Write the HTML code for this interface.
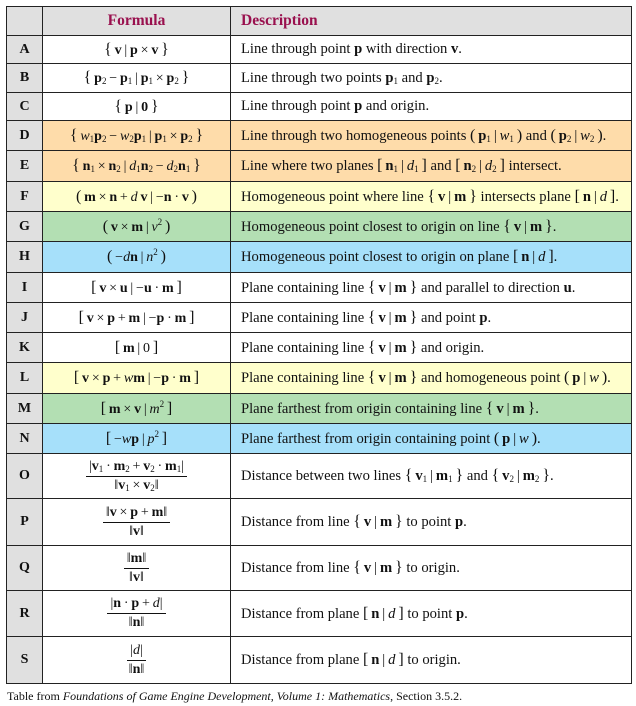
<!DOCTYPE html>
<html><head><meta charset="utf-8"><style>
body{margin:0;background:#fff;width:636px;height:706px;position:relative;font-family:"Liberation Serif",serif;color:#111;overflow:hidden}
.r{position:absolute;left:7px;width:624px;display:flex;border-top:1px solid #222;box-sizing:border-box}
.c1{width:36px;background:#e0e0e0;font-weight:bold;font-size:14px;display:flex;align-items:center;justify-content:center;border-right:1px solid #222;box-sizing:border-box}
.c2{width:188px;display:flex;align-items:center;justify-content:center;font-size:14px;border-right:1px solid #222;box-sizing:border-box;white-space:nowrap}
.c3{flex:1;display:flex;align-items:center;padding-left:10px;font-size:14.6px;white-space:nowrap}
b{font-weight:bold}
i{font-style:italic}
sub{font-size:9px;vertical-align:-2px;line-height:0}
sup{font-size:9px;vertical-align:6px;line-height:0}
.o{background:#fedcaa}.y{background:#ffffcc}.g{background:#b3dfb3}.bl{background:#a6e0fa}
.frac{display:inline-flex;flex-direction:column;align-items:center;line-height:18px}
.frac .n{border-bottom:1px solid #111;padding:0 3px}
.k{font-size:16px}
#box{position:absolute;left:6px;top:6px;width:626px;height:678px;border:1px solid #222;box-sizing:border-box;pointer-events:none;z-index:5}
.h .c2,.h .c3{color:#99104e;font-weight:bold;font-size:15.5px;background:#e0e0e0}
.cap{position:absolute;left:7px;top:689px;font-size:12px}
</style></head><body>
<div id="box"></div>
<div class="r h" style="top:7px;height:28px;border-top:none"><div class="c1"></div><div class="c2">Formula</div><div class="c3">Description</div></div>
<div class="r" style="top:35px;height:28px"><div class="c1">A</div><div class="c2"><span><span class="k">{</span>&thinsp;<b>v</b>&thinsp;|&thinsp;<b>p</b>&thinsp;×&thinsp;<b>v</b>&thinsp;<span class="k">}</span></span></div><div class="c3"><span>Line through point <b>p</b> with direction <b>v</b>.</span></div></div>
<div class="r" style="top:63px;height:29px"><div class="c1">B</div><div class="c2"><span><span class="k">{</span>&thinsp;<b>p</b><sub>2</sub>&thinsp;−&thinsp;<b>p</b><sub>1</sub>&thinsp;|&thinsp;<b>p</b><sub>1</sub>&thinsp;×&thinsp;<b>p</b><sub>2</sub>&thinsp;<span class="k">}</span></span></div><div class="c3"><span>Line through two points <b>p</b><sub>1</sub> and <b>p</b><sub>2</sub>.</span></div></div>
<div class="r" style="top:92px;height:28px"><div class="c1">C</div><div class="c2"><span><span class="k">{</span>&thinsp;<b>p</b>&thinsp;|&thinsp;<b>0</b>&thinsp;<span class="k">}</span></span></div><div class="c3"><span>Line through point <b>p</b> and origin.</span></div></div>
<div class="r" style="top:120px;height:30px"><div class="c1">D</div><div class="c2 o"><span><span class="k">{</span>&thinsp;<i>w</i><sub>1</sub><b>p</b><sub>2</sub>&thinsp;−&thinsp;<i>w</i><sub>2</sub><b>p</b><sub>1</sub>&thinsp;|&thinsp;<b>p</b><sub>1</sub>&thinsp;×&thinsp;<b>p</b><sub>2</sub>&thinsp;<span class="k">}</span></span></div><div class="c3 o"><span>Line through two homogeneous points <span class="k">(</span>&thinsp;<b>p</b><sub>1</sub>&thinsp;|&thinsp;<i>w</i><sub>1</sub>&thinsp;<span class="k">)</span> and <span class="k">(</span>&thinsp;<b>p</b><sub>2</sub>&thinsp;|&thinsp;<i>w</i><sub>2</sub>&thinsp;<span class="k">)</span>.</span></div></div>
<div class="r" style="top:150px;height:31px"><div class="c1">E</div><div class="c2 o"><span><span class="k">{</span>&thinsp;<b>n</b><sub>1</sub>&thinsp;×&thinsp;<b>n</b><sub>2</sub>&thinsp;|&thinsp;<i>d</i><sub>1</sub><b>n</b><sub>2</sub>&thinsp;−&thinsp;<i>d</i><sub>2</sub><b>n</b><sub>1</sub>&thinsp;<span class="k">}</span></span></div><div class="c3 o"><span>Line where two planes <span class="k">[</span>&thinsp;<b>n</b><sub>1</sub>&thinsp;|&thinsp;<i>d</i><sub>1</sub>&thinsp;<span class="k">]</span> and <span class="k">[</span>&thinsp;<b>n</b><sub>2</sub>&thinsp;|&thinsp;<i>d</i><sub>2</sub>&thinsp;<span class="k">]</span> intersect.</span></div></div>
<div class="r" style="top:181px;height:30px"><div class="c1">F</div><div class="c2 y"><span><span class="k">(</span>&thinsp;<b>m</b>&thinsp;×&thinsp;<b>n</b>&thinsp;+&thinsp;<i>d</i>&thinsp;<b>v</b>&thinsp;|&thinsp;−<b>n</b>&thinsp;·&thinsp;<b>v</b>&thinsp;<span class="k">)</span></span></div><div class="c3 y"><span>Homogeneous point where line <span class="k">{</span>&thinsp;<b>v</b>&thinsp;|&thinsp;<b>m</b>&thinsp;<span class="k">}</span> intersects plane <span class="k">[</span>&thinsp;<b>n</b>&thinsp;|&thinsp;<i>d</i>&thinsp;<span class="k">]</span>.</span></div></div>
<div class="r" style="top:211px;height:30px"><div class="c1">G</div><div class="c2 g"><span><span class="k">(</span>&thinsp;<b>v</b>&thinsp;×&thinsp;<b>m</b>&thinsp;|&thinsp;<i>v</i><sup>2</sup>&thinsp;<span class="k">)</span></span></div><div class="c3 g"><span>Homogeneous point closest to origin on line <span class="k">{</span>&thinsp;<b>v</b>&thinsp;|&thinsp;<b>m</b>&thinsp;<span class="k">}</span>.</span></div></div>
<div class="r" style="top:241px;height:31px"><div class="c1">H</div><div class="c2 bl"><span><span class="k">(</span>&thinsp;−<i>d</i><b>n</b>&thinsp;|&thinsp;<i>n</i><sup>2</sup>&thinsp;<span class="k">)</span></span></div><div class="c3 bl"><span>Homogeneous point closest to origin on plane <span class="k">[</span>&thinsp;<b>n</b>&thinsp;|&thinsp;<i>d</i>&thinsp;<span class="k">]</span>.</span></div></div>
<div class="r" style="top:272px;height:30px"><div class="c1">I</div><div class="c2"><span><span class="k">[</span>&thinsp;<b>v</b>&thinsp;×&thinsp;<b>u</b>&thinsp;|&thinsp;−<b>u</b>&thinsp;·&thinsp;<b>m</b>&thinsp;<span class="k">]</span></span></div><div class="c3"><span>Plane containing line <span class="k">{</span>&thinsp;<b>v</b>&thinsp;|&thinsp;<b>m</b>&thinsp;<span class="k">}</span> and parallel to direction <b>u</b>.</span></div></div>
<div class="r" style="top:302px;height:30px"><div class="c1">J</div><div class="c2"><span><span class="k">[</span>&thinsp;<b>v</b>&thinsp;×&thinsp;<b>p</b>&thinsp;+&thinsp;<b>m</b>&thinsp;|&thinsp;−<b>p</b>&thinsp;·&thinsp;<b>m</b>&thinsp;<span class="k">]</span></span></div><div class="c3"><span>Plane containing line <span class="k">{</span>&thinsp;<b>v</b>&thinsp;|&thinsp;<b>m</b>&thinsp;<span class="k">}</span> and point <b>p</b>.</span></div></div>
<div class="r" style="top:332px;height:30px"><div class="c1">K</div><div class="c2"><span><span class="k">[</span>&thinsp;<b>m</b>&thinsp;|&thinsp;0&thinsp;<span class="k">]</span></span></div><div class="c3"><span>Plane containing line <span class="k">{</span>&thinsp;<b>v</b>&thinsp;|&thinsp;<b>m</b>&thinsp;<span class="k">}</span> and origin.</span></div></div>
<div class="r" style="top:362px;height:31px"><div class="c1">L</div><div class="c2 y"><span><span class="k">[</span>&thinsp;<b>v</b>&thinsp;×&thinsp;<b>p</b>&thinsp;+&thinsp;<i>w</i><b>m</b>&thinsp;|&thinsp;−<b>p</b>&thinsp;·&thinsp;<b>m</b>&thinsp;<span class="k">]</span></span></div><div class="c3 y"><span>Plane containing line <span class="k">{</span>&thinsp;<b>v</b>&thinsp;|&thinsp;<b>m</b>&thinsp;<span class="k">}</span> and homogeneous point <span class="k">(</span>&thinsp;<b>p</b>&thinsp;|&thinsp;<i>w</i>&thinsp;<span class="k">)</span>.</span></div></div>
<div class="r" style="top:393px;height:30px"><div class="c1">M</div><div class="c2 g"><span><span class="k">[</span>&thinsp;<b>m</b>&thinsp;×&thinsp;<b>v</b>&thinsp;|&thinsp;<i>m</i><sup>2</sup>&thinsp;<span class="k">]</span></span></div><div class="c3 g"><span>Plane farthest from origin containing line <span class="k">{</span>&thinsp;<b>v</b>&thinsp;|&thinsp;<b>m</b>&thinsp;<span class="k">}</span>.</span></div></div>
<div class="r" style="top:423px;height:30px"><div class="c1">N</div><div class="c2 bl"><span><span class="k">[</span>&thinsp;−<i>w</i><b>p</b>&thinsp;|&thinsp;<i>p</i><sup>2</sup>&thinsp;<span class="k">]</span></span></div><div class="c3 bl"><span>Plane farthest from origin containing point <span class="k">(</span>&thinsp;<b>p</b>&thinsp;|&thinsp;<i>w</i>&thinsp;<span class="k">)</span>.</span></div></div>
<div class="r" style="top:453px;height:45px"><div class="c1">O</div><div class="c2"><span class="frac"><span class="n">|<b>v</b><sub>1</sub>&thinsp;·&thinsp;<b>m</b><sub>2</sub>&thinsp;+&thinsp;<b>v</b><sub>2</sub>&thinsp;·&thinsp;<b>m</b><sub>1</sub>|</span><span>‖<b>v</b><sub>1</sub>&thinsp;×&thinsp;<b>v</b><sub>2</sub>‖</span></span></div><div class="c3"><span>Distance between two lines <span class="k">{</span>&thinsp;<b>v</b><sub>1</sub>&thinsp;|&thinsp;<b>m</b><sub>1</sub>&thinsp;<span class="k">}</span> and <span class="k">{</span>&thinsp;<b>v</b><sub>2</sub>&thinsp;|&thinsp;<b>m</b><sub>2</sub>&thinsp;<span class="k">}</span>.</span></div></div>
<div class="r" style="top:498px;height:47px"><div class="c1">P</div><div class="c2"><span class="frac"><span class="n">‖<b>v</b>&thinsp;×&thinsp;<b>p</b>&thinsp;+&thinsp;<b>m</b>‖</span><span>‖<b>v</b>‖</span></span></div><div class="c3"><span>Distance from line <span class="k">{</span>&thinsp;<b>v</b>&thinsp;|&thinsp;<b>m</b>&thinsp;<span class="k">}</span> to point <b>p</b>.</span></div></div>
<div class="r" style="top:545px;height:45px"><div class="c1">Q</div><div class="c2"><span class="frac"><span class="n">‖<b>m</b>‖</span><span>‖<b>v</b>‖</span></span></div><div class="c3"><span>Distance from line <span class="k">{</span>&thinsp;<b>v</b>&thinsp;|&thinsp;<b>m</b>&thinsp;<span class="k">}</span> to origin.</span></div></div>
<div class="r" style="top:590px;height:46px"><div class="c1">R</div><div class="c2"><span class="frac"><span class="n">|<b>n</b>&thinsp;·&thinsp;<b>p</b>&thinsp;+&thinsp;<i>d</i>|</span><span>‖<b>n</b>‖</span></span></div><div class="c3"><span>Distance from plane <span class="k">[</span>&thinsp;<b>n</b>&thinsp;|&thinsp;<i>d</i>&thinsp;<span class="k">]</span> to point <b>p</b>.</span></div></div>
<div class="r" style="top:636px;height:47px"><div class="c1">S</div><div class="c2"><span class="frac"><span class="n">|<i>d</i>|</span><span>‖<b>n</b>‖</span></span></div><div class="c3"><span>Distance from plane <span class="k">[</span>&thinsp;<b>n</b>&thinsp;|&thinsp;<i>d</i>&thinsp;<span class="k">]</span> to origin.</span></div></div>
<div class="cap">Table from <i>Foundations of Game Engine Development, Volume 1: Mathematics</i>, Section 3.5.2.</div>
</body></html>
